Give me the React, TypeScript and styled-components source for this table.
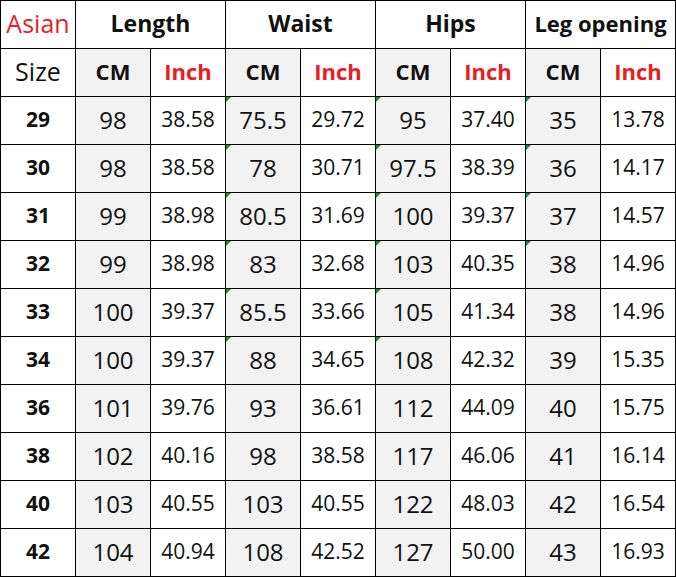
import React from 'react'
import styled, { createGlobalStyle } from 'styled-components'

const rows: [string, string, string, string, string, string, string, string, string][] = [
  ['29', '98', '38.58', '75.5', '29.72', '95', '37.40', '35', '13.78'],
  ['30', '98', '38.58', '78', '30.71', '97.5', '38.39', '36', '14.17'],
  ['31', '99', '38.98', '80.5', '31.69', '100', '39.37', '37', '14.57'],
  ['32', '99', '38.98', '83', '32.68', '103', '40.35', '38', '14.96'],
  ['33', '100', '39.37', '85.5', '33.66', '105', '41.34', '38', '14.96'],
  ['34', '100', '39.37', '88', '34.65', '108', '42.32', '39', '15.35'],
  ['36', '101', '39.76', '93', '36.61', '112', '44.09', '40', '15.75'],
  ['38', '102', '40.16', '98', '38.58', '117', '46.06', '41', '16.14'],
  ['40', '103', '40.55', '103', '40.55', '122', '48.03', '42', '16.54'],
  ['42', '104', '40.94', '108', '42.52', '127', '50.00', '43', '16.93'],
]

const groups = ['Length', 'Waist', 'Hips', 'Leg opening']

// excel's little green "number stored as text" flags
function flagged(row: number, col: number) {
  if (col === 3 || col === 5) return row <= 5
  if (col === 7) return row <= 3
  return false
}

export default function App() {
  return (
    <>
      <Global />
      <Sheet>
        <Cell>
          <Label $red>Asian</Label>
        </Cell>
        {groups.map((g) => (
          <Cell key={g} $span={2}>
            <Heading $wide={g !== 'Leg opening'}>{g}</Heading>
          </Cell>
        ))}

        <Cell>
          <Label>Size</Label>
        </Cell>
        {groups.map((g) => (
          <React.Fragment key={g}>
            <Cell $grey>
              <Heading>CM</Heading>
            </Cell>
            <Cell>
              <Heading $red>Inch</Heading>
            </Cell>
          </React.Fragment>
        ))}

        {rows.map((r, ri) =>
          r.map((v, ci) => (
            <Cell key={ri + '-' + ci} $grey={ci % 2 === 1}>
              {flagged(ri, ci) && <Flag />}
              {ci === 0 ? <SizeNum>{v}</SizeNum> : ci % 2 === 1 ? <Cm>{v}</Cm> : <Inch>{v}</Inch>}
            </Cell>
          ))
        )}
      </Sheet>
    </>
  )
}

const Global = createGlobalStyle`
  body {
    margin: 0;
    background: #fff;
    font-family: "Open Sans", "Noto Sans", sans-serif;
  }
`

const Sheet = styled.div`
  display: grid;
  grid-template-columns: repeat(9, 74px);
  grid-template-rows: repeat(12, 47px);
  gap: 1px;
  padding: 1px;
  width: max-content;
  background: #000;
`

const Cell = styled.div<{ $span?: number; $grey?: boolean }>`
  position: relative;
  grid-column: span ${(p) => p.$span ?? 1};
  display: flex;
  align-items: center;
  justify-content: center;
  padding-bottom: 3px;
  background: ${(p) => (p.$grey ? '#f2f2f2' : '#fff')};
  color: #111;
  white-space: nowrap;
`

const Label = styled.span<{ $red?: boolean }>`
  font-size: 25px;
  color: ${(p) => (p.$red ? '#ec1c24' : '#111')};
`

const Heading = styled.span<{ $red?: boolean; $wide?: boolean }>`
  font-size: ${(p) => (p.$wide ? '23px' : '22px')};
  font-weight: 700;
  color: ${(p) => (p.$red ? '#ec1c24' : '#111')};
`

const SizeNum = styled.span`
  font-size: 21px;
  font-weight: 700;
`

const Cm = styled.span`
  font-size: 24px;
`

const Inch = styled.span`
  font-size: 21px;
`

const Flag = styled.span`
  position: absolute;
  top: 0;
  left: 0;
  width: 0;
  height: 0;
  border-top: 5px solid #1e8a2e;
  border-right: 5px solid transparent;
`
